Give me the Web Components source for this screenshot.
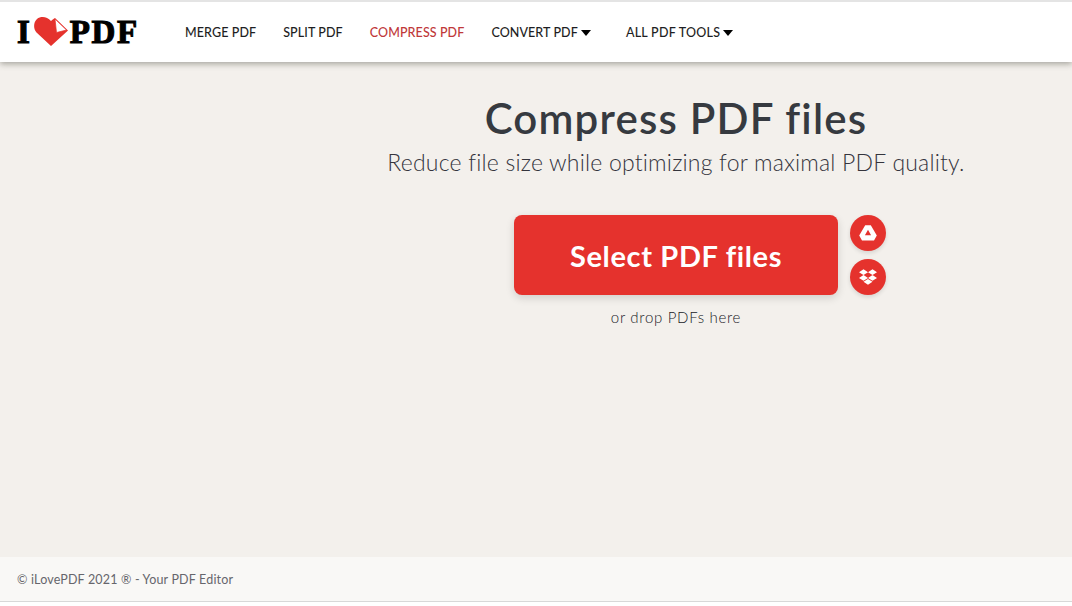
<!DOCTYPE html>
<html><head><meta charset="utf-8"><style>
html,body{margin:0;padding:0;height:100%;background:#fff}
body{font-family:Lato,"Open Sans",sans-serif;overflow:hidden}
</style></head><body>
<ilp-app></ilp-app>
<script>
class IlpLogo extends HTMLElement{constructor(){super();this.attachShadow({mode:'open'}).innerHTML=`<style>
:host{display:flex;align-items:center;height:36px;width:122px;font:900 33px/36px "Liberation Serif",serif;color:#000;-webkit-text-stroke:1.1px #000;letter-spacing:1.6px;margin-left:1px}
svg{display:block;margin:-1px 2px 0 2.400px;flex:none}
span{display:block}
</style><span>I</span><svg width="34" height="29" viewBox="0 0 34 29"><path d="M17 29 2.500 15.500C-1 11.500-.5 5 3 2 7-1 13-.5 17 4 18.500 2.500 20 1.500 21 1L34 13.500Z" fill="#e5322d"/><path d="M21 2 32.500 13 22.500 15.500Z" fill="#fff" stroke="#e5322d" stroke-width=".7"/></svg><span>PDF</span>`}}
customElements.define('ilp-logo',IlpLogo);
class IlpNavItem extends HTMLElement{constructor(){super();this.attachShadow({mode:'open'}).innerHTML=`<style>
:host{display:inline-flex;align-items:center;gap:3px;font:500 12.500px/16px Lato,sans-serif;color:#1e1e23;white-space:nowrap;letter-spacing:.1px}
:host([active]){color:#c0383a}
:host([wide]){letter-spacing:.25px}
.c{display:none;width:0;height:0;border-style:solid;border-color:#000 transparent transparent;border-width:6px 5px 0;margin-top:-1px}
:host([caret]) .c{display:block}
</style><slot></slot><i class="c"></i>`}}
customElements.define('ilp-nav-item',IlpNavItem);
class IlpHeader extends HTMLElement{constructor(){super();this.attachShadow({mode:'open'}).innerHTML=`<style>
:host{display:flex;align-items:center;box-sizing:border-box;height:62px;background:#fff;border-top:2px solid #e4e4e4;padding:0 0 0 16px;box-shadow:0 2px 6px rgba(70,70,60,.45);position:relative;z-index:2}
nav{display:flex;align-items:center;margin:2px 0 0 46px;gap:27px}
</style><ilp-logo></ilp-logo><nav><ilp-nav-item>MERGE PDF</ilp-nav-item><ilp-nav-item>SPLIT PDF</ilp-nav-item><ilp-nav-item active>COMPRESS PDF</ilp-nav-item><ilp-nav-item caret>CONVERT PDF</ilp-nav-item><ilp-nav-item caret wide style="margin-left:8px">ALL PDF TOOLS</ilp-nav-item></nav>`}}
customElements.define('ilp-header',IlpHeader);
class IlpCloud extends HTMLElement{constructor(){super();this.attachShadow({mode:'open'}).innerHTML=`<style>
:host{display:flex;align-items:center;justify-content:center;width:36px;height:36px;border-radius:50%;background:#e5322d;box-shadow:0 2px 4px rgba(0,0,0,.12)}
</style><slot></slot>`}}
customElements.define('ilp-cloud',IlpCloud);
class IlpUploader extends HTMLElement{constructor(){super();this.attachShadow({mode:'open'}).innerHTML=`<style>
:host{display:block;position:relative;width:324px}
.btn{display:flex;align-items:center;justify-content:center;height:80px;border-radius:8px;background:#e5322d;color:#fff;font:700 29px/1 Lato,sans-serif;letter-spacing:.65px;box-shadow:0 3px 8px rgba(0,0,0,.14)}
.drop{margin-top:13px;text-align:center;font:300 15px/18px Lato,sans-serif;color:#202026;letter-spacing:.7px}
.clouds{position:absolute;left:336px;top:0;display:flex;flex-direction:column;gap:8px}
</style><div class="btn">Select PDF files</div><div class="drop">or drop PDFs here</div>
<div class="clouds"><ilp-cloud><svg width="18" height="16" viewBox="0 0 18 16"><path fill="#fff" fill-rule="evenodd" d="M6.200.300h5.600L17.800 10.500 15 15.500H3L.200 10.500ZM9 4.800 5.900 10.300H12.100Z"/></svg></ilp-cloud><ilp-cloud><svg width="18" height="18" viewBox="0 0 528 512"><path fill="#fff" d="M264.400 116.300l-132 84.300 132 84.300-132 84.300L0 284.100l132.300-84.300L0 116.300 132.300 32l132.100 84.300zM131.600 395.700l132-84.300 132 84.300-132 84.300-132-84.300zm132.800-111l132-84.300-132-83.600L396.500 32 528 116.300l-132.300 84.300L528 284.800l-132.300 84.300-131.300-84.400z"/></svg></ilp-cloud></div>`}}
customElements.define('ilp-uploader',IlpUploader);
class IlpMain extends HTMLElement{constructor(){super();this.attachShadow({mode:'open'}).innerHTML=`<style>
:host{display:flex;flex-direction:column;align-items:center;flex:1;background:#f3f0ec;padding-left:280px;padding-top:31px;box-sizing:border-box}
h1{margin:0 0 1px;font:600 42px/50px Lato,sans-serif;color:#363a40;letter-spacing:1.2px}
p{margin:0 0 35px;font:300 23px/36px Lato,sans-serif;color:#34343c;letter-spacing:.2px}
</style><h1>Compress PDF files</h1><p>Reduce file size while optimizing for maximal PDF quality.</p><ilp-uploader></ilp-uploader>`}}
customElements.define('ilp-main',IlpMain);
class IlpFooter extends HTMLElement{constructor(){super();this.attachShadow({mode:'open'}).innerHTML=`<style>
:host{display:flex;align-items:center;box-sizing:border-box;height:45px;padding:2px 0 0 17px;background:#f9f8f6;border-bottom:1px solid #d8d8d8;font:400 12.500px/16px Lato,sans-serif;color:#66666c;letter-spacing:.17px;margin-bottom:4px}
</style>© iLovePDF 2021 ® - Your PDF Editor`}}
customElements.define('ilp-footer',IlpFooter);
class IlpApp extends HTMLElement{constructor(){super();this.attachShadow({mode:'open'}).innerHTML=`<style>
:host{display:flex;flex-direction:column;height:606px}
</style><ilp-header></ilp-header><ilp-main></ilp-main><ilp-footer></ilp-footer>`}}
customElements.define('ilp-app',IlpApp);
</script></body></html>
